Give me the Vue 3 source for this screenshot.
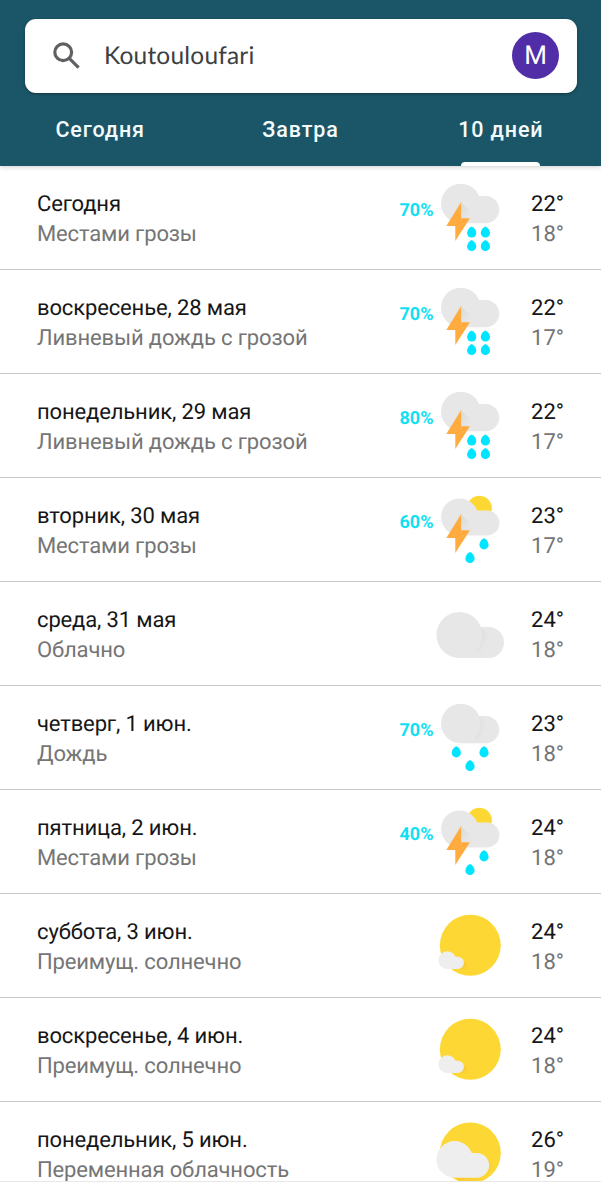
<template>
  <div class="app">
    <header class="header">
      <div class="search">
        <svg class="search-icon" viewBox="0 0 28 28">
          <circle cx="10.2" cy="10.2" r="8.4" />
          <path d="M16.3 16.3 L25.6 25.6" />
        </svg>
        <span class="place">{{ place }}</span>
        <span class="avatar">M</span>
      </div>
      <nav class="tabs">
        <button
          v-for="tab in tabs"
          :key="tab"
          class="tab"
          :class="{ active: tab === activeTab }"
          @click="activeTab = tab"
        >
          <span class="label">{{ tab }}</span>
        </button>
      </nav>
    </header>

    <ul class="days">
      <li v-for="day in days" :key="day.name" class="day">
        <div class="info">
          <div class="name">{{ day.name }}</div>
          <div class="text">{{ day.text }}</div>
        </div>
        <span class="chance">{{ day.chance }}</span>
        <svg class="icon" viewBox="0 0 76 104">
          <defs>
            <linearGradient id="shade" x1="0" y1="0" x2="1" y2="0.7">
              <stop offset="0" stop-color="#d9d9d9" />
              <stop offset="0.75" stop-color="#e7e7e7" />
            </linearGradient>
            <linearGradient id="sunShade" x1="0" y1="0" x2="1" y2="0.6">
              <stop offset="0" stop-color="#f8bd30" />
              <stop offset="1" stop-color="#fdd835" />
            </linearGradient>
          </defs>
          <circle
            v-if="icons[day.icon].sun"
            class="sun"
            :cx="icons[day.icon].sun[0]"
            :cy="icons[day.icon].sun[1]"
            :r="icons[day.icon].sun[2]"
          />
          <path v-if="icons[day.icon].shadow" :d="icons[day.icon].shadow" fill="url(#sunShade)" />
          <path class="cloud" :class="{ light: icons[day.icon].light }" :d="icons[day.icon].cloud" />
          <path v-if="icons[day.icon].fold" :d="icons[day.icon].fold" fill="url(#shade)" />
          <path
            v-if="icons[day.icon].bolt"
            class="bolt"
            d="M29 36.3 L14.3 60 H23.3 V75 L38 52.3 H29 Z"
          />
          <path
            v-for="(drop, i) in icons[day.icon].drops"
            :key="i"
            class="drop"
            :d="dropPath(drop)"
          />
        </svg>
        <div class="temps">
          <div class="high">{{ day.high }}°</div>
          <div class="low">{{ day.low }}°</div>
        </div>
      </li>
    </ul>
  </div>
</template>

<script setup>
import { ref } from 'vue'

const place = 'Koutouloufari'
const tabs = ['Сегодня', 'Завтра', '10 дней']
const activeTab = ref('10 дней')

const days = [
  { name: 'Сегодня', text: 'Местами грозы', chance: '70%', icon: 'storm', high: 22, low: 18 },
  { name: 'воскресенье, 28 мая', text: 'Ливневый дождь с грозой', chance: '70%', icon: 'storm', high: 22, low: 17 },
  { name: 'понедельник, 29 мая', text: 'Ливневый дождь с грозой', chance: '80%', icon: 'storm', high: 22, low: 17 },
  { name: 'вторник, 30 мая', text: 'Местами грозы', chance: '60%', icon: 'scattered', high: 23, low: 17 },
  { name: 'среда, 31 мая', text: 'Облачно', chance: '', icon: 'cloudy', high: 24, low: 18 },
  { name: 'четверг, 1 июн.', text: 'Дождь', chance: '70%', icon: 'rain', high: 23, low: 18 },
  { name: 'пятница, 2 июн.', text: 'Местами грозы', chance: '40%', icon: 'scattered', high: 24, low: 18 },
  { name: 'суббота, 3 июн.', text: 'Преимущ. солнечно', chance: '', icon: 'sunny', high: 24, low: 18 },
  { name: 'воскресенье, 4 июн.', text: 'Преимущ. солнечно', chance: '', icon: 'sunny', high: 24, low: 18 },
  { name: 'понедельник, 5 июн.', text: 'Переменная облачность', chance: '', icon: 'partly', high: 26, low: 19 },
]

function circle(x, y, r) {
  return `M${x - r} ${y} a${r} ${r} 0 1 1 ${2 * r} 0 a${r} ${r} 0 1 1 ${-2 * r} 0 Z`
}

// A big and a small circle, joined by a block as tall as the small one
function cloud(x1, y1, r1, x2, y2, r2) {
  return `${circle(x1, y1, r1)} ${circle(x2, y2, r2)} M${x1} ${y2 - r2} H${x2} V${y1 + r1} H${x1} Z`
}

function dropPath([x, y]) {
  return `M${x} ${y} C${x + 2.4} ${y + 1} ${x + 4.6} ${y + 3.8} ${x + 4.6} ${y + 6.5} a4.6 4.6 0 0 1 -9.2 0 C${x - 4.6} ${y + 3.8} ${x - 2.4} ${y + 1} ${x} ${y} Z`
}

const stormCloud = cloud(28.8, 37.5, 19.8, 53.6, 43.6, 13.7)

const icons = {
  storm: {
    cloud: stormCloud,
    fold: 'M29 36.3 L45 52.3 H38 H29 Z',
    bolt: true,
    drops: [[39.7, 60.5], [53.4, 60.5], [39.7, 74], [53.4, 74]],
  },
  scattered: {
    sun: [47.4, 30.3, 12.5],
    cloud: cloud(27.6, 38.9, 18.5, 55, 45, 12.4),
    fold: 'M29 36.3 L45 52.3 H38 H29 Z',
    bolt: true,
    drops: [[52, 60.3], [38, 74]],
  },
  cloudy: {
    cloud: cloud(27.4, 53, 23, 56.5, 60.5, 15.5),
    fold: 'M48.5 45 L60 58 L56 72 L43 69.9 A23 23 0 0 0 48.5 45 Z',
  },
  rain: {
    cloud: stormCloud,
    fold: 'M46.7 29.9 L57 42 L52 55 L42 52.3 A19.8 19.8 0 0 0 46.7 29.9 Z',
    drops: [[24.3, 60.3], [52, 60.3], [38, 74]],
  },
  sunny: {
    sun: [38.3, 51.3, 30.5],
    shadow: 'M31 66 L40 76 Q34 77 27 74 Z',
    cloud: cloud(15.3, 66.2, 8.9, 25.7, 68.9, 6.2),
    light: true,
  },
  partly: {
    sun: [38.3, 51, 30.5],
    shadow: 'M55 56 L62 64 Q57 76 45 80 L28 79.5 L22 75.5 Z',
    cloud: cloud(22.7, 57.4, 18.3, 44.7, 63.3, 12.4),
    light: true,
  },
}
</script>

<style>
body {
  margin: 0;
  background: #fff;
}
</style>

<style scoped>
.app {
  height: 1200px;
  overflow: hidden;
  background: #fff;
  font-family: Roboto, "Noto Sans", sans-serif;
  text-rendering: geometricPrecision;
}

.header {
  box-sizing: border-box;
  height: 166px;
  padding: 19px 24.5px 0;
  background: #1b5568;
  box-shadow: 0 1px 5px rgba(0, 0, 0, 0.2);
}

.search {
  box-sizing: border-box;
  display: flex;
  align-items: center;
  height: 74px;
  padding: 0 17.5px 0 28.5px;
  border-radius: 11px;
  background: #fff;
  box-shadow: 0 1px 3px rgba(0, 0, 0, 0.35);
}

.search-icon {
  width: 28px;
  height: 28px;
  fill: none;
  stroke: #5f6063;
  stroke-width: 3.2;
}

.place {
  flex: 1;
  padding-left: 23px;
  color: #3c4043;
  font-family: Lato, sans-serif;
  font-size: 24.5px;
  line-height: 30px;
  letter-spacing: 0.2px;
}

.avatar {
  width: 47px;
  height: 47px;
  margin-bottom: 1px;
  border-radius: 50%;
  background: #512da8;
  color: #fff;
  font-size: 26px;
  line-height: 49px;
  text-align: center;
}

.tabs {
  display: flex;
  height: 73px;
  margin: 0 -24.5px;
}

.tab {
  flex: 1;
  display: flex;
  justify-content: center;
  padding: 0;
  border: 0;
  background: none;
  color: #f4fbfc;
  font-family: Roboto, sans-serif;
  font-size: 21.5px;
  font-weight: 500;
  letter-spacing: 0.9px;
}

.label {
  height: 73px;
  line-height: 73px;
}

.active::after {
  content: "";
  align-self: flex-end;
  width: 79px;
  height: 4px;
  margin-right: 4px;
  margin-left: -83px;
  border-radius: 4px 4px 0 0;
  background: #fff;
}

.days {
  height: 1015px;
  margin: 0;
  padding: 0;
  overflow: hidden;
  border-bottom: 1px solid #e8e8e8;
  list-style: none;
}

.day {
  box-sizing: border-box;
  display: flex;
  height: 104px;
  padding: 0 37px;
  border-bottom: 1px solid #c8c8c8;
}

.info {
  flex: 1;
  padding-top: 24px;
  font-size: 22px;
  line-height: 30px;
  letter-spacing: -0.14px;
  white-space: nowrap;
}

.name,
.high {
  color: #161616;
}

.text,
.low {
  color: #757575;
}

.chance {
  margin-right: -1.5px;
  padding-top: 33px;
  color: #0fe0f2;
  font-size: 18px;
  font-weight: 700;
  line-height: 24px;
}

.icon {
  width: 76px;
  height: 104px;
}

.temps {
  width: 56px;
  padding-top: 24px;
  font-size: 22px;
  line-height: 30px;
  text-align: right;
}

.sun {
  fill: #fdd835;
}

.cloud {
  fill: #e7e7e7;
}

.cloud.light {
  fill: #eee;
}

.bolt {
  fill: #ffab40;
}

.drop {
  fill: #00e5ff;
}
</style>
